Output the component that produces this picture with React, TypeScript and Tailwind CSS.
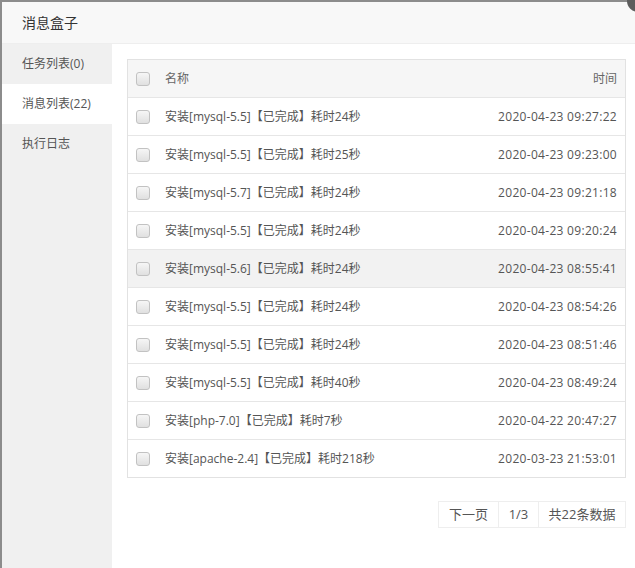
import React from "react";

const rows: [string, string, boolean?][] = [
  ["安装[mysql-5.5]【已完成】耗时24秒", "2020-04-23 09:27:22"],
  ["安装[mysql-5.5]【已完成】耗时25秒", "2020-04-23 09:23:00"],
  ["安装[mysql-5.7]【已完成】耗时24秒", "2020-04-23 09:21:18"],
  ["安装[mysql-5.5]【已完成】耗时24秒", "2020-04-23 09:20:24"],
  ["安装[mysql-5.6]【已完成】耗时24秒", "2020-04-23 08:55:41", true],
  ["安装[mysql-5.5]【已完成】耗时24秒", "2020-04-23 08:54:26"],
  ["安装[mysql-5.5]【已完成】耗时24秒", "2020-04-23 08:51:46"],
  ["安装[mysql-5.5]【已完成】耗时40秒", "2020-04-23 08:49:24"],
  ["安装[php-7.0]【已完成】耗时7秒", "2020-04-22 20:47:27"],
  ["安装[apache-2.4]【已完成】耗时218秒", "2020-03-23 21:53:01"],
];

function Check() {
  return (
    <span className="block w-[14px] h-[14px] rounded-[3px] border border-[#c2c2c2] bg-gradient-to-b from-[#f6f6f6] to-[#e0e0e0]" />
  );
}

export default function App() {
  return (
    <div
      className="w-[635px] h-[568px] overflow-hidden bg-[#8c8c8c] pt-[2px] pl-[2px] relative"
      style={{ fontFamily: '"Open Sans", "Noto Sans CJK SC", sans-serif' }}
    >
      <div className="absolute right-[-14px] top-[-10px] w-[22px] h-[22px] rounded-full bg-[#5d5d5d] z-10" />
      <div className="w-full h-full bg-white flex flex-col">
        <div className="h-[42px] shrink-0 bg-[#f8f8f8] border-b border-[#eeeeee] flex items-center pl-[20px] text-[14px] text-[#333]">
          消息盒子
        </div>
        <div className="flex flex-1 min-h-0">
          <div className="w-[110px] shrink-0 bg-[#f0f0f0] text-[12px] text-[#555]">
            <div className="h-[40px] pl-[20px] flex items-center">任务列表(0)</div>
            <div className="h-[40px] pl-[20px] flex items-center bg-white">消息列表(22)</div>
            <div className="h-[40px] pl-[20px] flex items-center">执行日志</div>
          </div>
          <div className="flex-1 pt-[15px] pl-[15px] pr-[9px]">
            <div className="border border-[#e2e2e2] text-[12px] text-[#555]">
              <div className="h-[37px] flex items-center bg-[#f6f6f6] text-[#666]">
                <div className="w-[37px] pl-[8px] flex items-center">
                  <Check />
                </div>
                <div className="flex-1">名称</div>
                <div className="pr-[8px]">时间</div>
              </div>
              {rows.map(([name, time, hl], i) => (
                <div
                  key={i}
                  className={`h-[38px] flex items-center border-t border-[#e6e6e6] ${hl ? "bg-[#f2f2f2]" : ""}`}
                >
                  <div className="w-[37px] pl-[8px] flex items-center">
                    <Check />
                  </div>
                  <div className="flex-1">{name}</div>
                  <div className="pr-[8px] tracking-[0.3px]">{time}</div>
                </div>
              ))}
            </div>
            <div className="flex justify-end mt-[23px]">
              <div className="flex border border-[#eeeeee] text-[13px] text-[#555] h-[27px]">
                <div className="w-[60px] flex items-center justify-center border-r border-[#eeeeee]">下一页</div>
                <div className="w-[40px] flex items-center justify-center border-r border-[#eeeeee]">1/3</div>
                <div className="w-[86px] flex items-center justify-center">共22条数据</div>
              </div>
            </div>
          </div>
        </div>
      </div>
    </div>
  );
}
